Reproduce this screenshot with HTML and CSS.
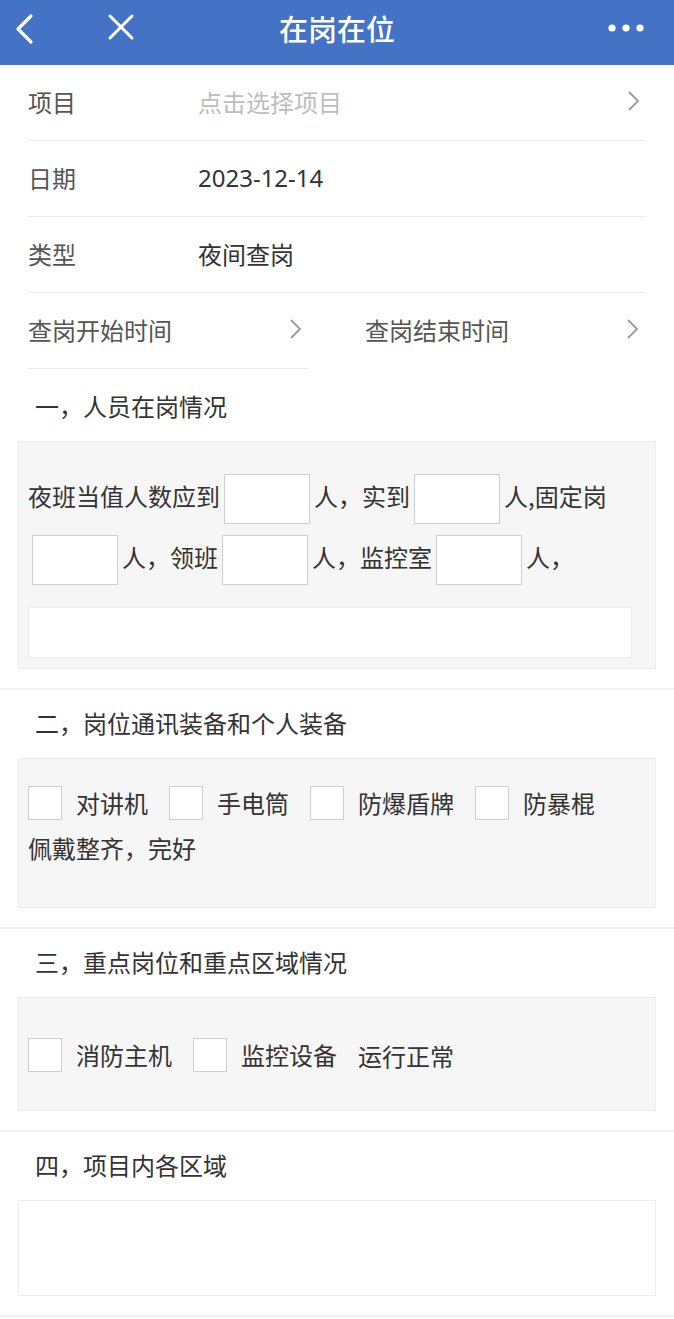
FILE: index.html
```html
<!DOCTYPE html>
<html lang="zh-CN">
<head>
    <meta charset="UTF-8">
    <meta name="viewport" content="width=device-width, initial-scale=1.0">
    <title>在岗在位</title>
    <link rel="stylesheet" href="styles.css">
</head>
<body>
    <header class="topbar">
        <div class="topbar-left">
            <svg class="icon-back" width="24" height="32" viewBox="0 0 24 32">
                <path d="M19 3 L6 16 L19 29" fill="none" stroke="#fff" stroke-width="3.2" stroke-linecap="round" stroke-linejoin="round"/>
            </svg>
            <svg class="icon-close" width="30" height="30" viewBox="0 0 30 30">
                <path d="M4 4 L26 26 M26 4 L4 26" fill="none" stroke="#fff" stroke-width="3" stroke-linecap="round"/>
            </svg>
        </div>
        <h1 class="title">在岗在位</h1>
        <svg class="icon-more" width="36" height="10" viewBox="0 0 36 10">
            <circle cx="4" cy="5" r="3.6" fill="#fff"/>
            <circle cx="18" cy="5" r="3.6" fill="#fff"/>
            <circle cx="32" cy="5" r="3.6" fill="#fff"/>
        </svg>
    </header>

    <form class="form">
        <div class="row">
            <span class="label">项目</span>
            <span class="value placeholder">点击选择项目</span>
            <svg class="chevron" width="14" height="22" viewBox="0 0 14 22"><path d="M3 2 L12 11 L3 20" fill="none" stroke="#9a9a9a" stroke-width="1.8"/></svg>
        </div>
        <div class="row">
            <span class="label">日期</span>
            <span class="value">2023-12-14</span>
        </div>
        <div class="row">
            <span class="label">类型</span>
            <span class="value">夜间查岗</span>
        </div>
        <div class="row-split">
            <div class="row half">
                <span class="label">查岗开始时间</span>
                <svg class="chevron" width="14" height="22" viewBox="0 0 14 22"><path d="M3 2 L12 11 L3 20" fill="none" stroke="#9a9a9a" stroke-width="1.8"/></svg>
            </div>
            <div class="row half no-line">
                <span class="label">查岗结束时间</span>
                <svg class="chevron" width="14" height="22" viewBox="0 0 14 22"><path d="M3 2 L12 11 L3 20" fill="none" stroke="#9a9a9a" stroke-width="1.8"/></svg>
            </div>
        </div>

        <section class="section first">
            <h2 class="section-title">一，人员在岗情况</h2>
            <div class="panel panel-staff">
                <p class="fill-line">夜班当值人数应到<input class="num" type="text">人，实到<input class="num" type="text">人,固定岗<br><input class="num" type="text">人，领班<input class="num" type="text">人，监控室<input class="num" type="text">人，</p>
                <input class="note" type="text">
            </div>
        </section>

        <section class="section">
            <h2 class="section-title">二，岗位通讯装备和个人装备</h2>
            <div class="panel panel-gear">
                <div class="checks">
                    <label class="check"><span class="box"></span>对讲机</label>
                    <label class="check"><span class="box"></span>手电筒</label>
                    <label class="check"><span class="box"></span>防爆盾牌</label>
                    <label class="check"><span class="box"></span>防暴棍</label>
                </div>
                <p class="tail">佩戴整齐，完好</p>
            </div>
        </section>

        <section class="section">
            <h2 class="section-title">三，重点岗位和重点区域情况</h2>
            <div class="panel panel-key">
                <div class="checks">
                    <label class="check"><span class="box"></span>消防主机</label>
                    <label class="check"><span class="box"></span>监控设备</label>
                    <span class="plain">运行正常</span>
                </div>
            </div>
        </section>

        <section class="section">
            <h2 class="section-title">四，项目内各区域</h2>
            <div class="panel panel-area"></div>
        </section>
    </form>
</body>
</html>
```

FILE: styles.css
```css
body {
    margin: 0;
    padding: 0;
    background: #ffffff;
    font-family: "Noto Sans CJK SC", "Noto Sans", sans-serif;
    color: #333;
}
.topbar {
    height: 65px;
    background: #4472c4;
    display: flex;
    align-items: center;
    justify-content: space-between;
    padding: 0 30px 0 12px;
    position: relative;
}
.topbar-left {
    display: flex;
    align-items: center;
    gap: 70px;
}
.icon-back {
    margin-top: -8px;
}
.icon-close {
    margin-top: -12px;
}
.title {
    position: absolute;
    left: 0;
    right: 0;
    top: 8px;
    margin: 0;
    text-align: center;
    color: #fff;
    font-size: 29px;
    font-weight: 500;
    line-height: 40px;
    pointer-events: none;
}
.icon-more {
    margin-top: -9px;
}
.form {
    margin: 0;
}
.row {
    display: flex;
    align-items: center;
    box-sizing: border-box;
    height: 76px;
    padding-bottom: 3px;
    margin: 0 28px;
    border-bottom: 1px solid #ededed;
    font-size: 24px;
}
.label {
    width: 170px;
    color: #555;
}
.value {
    flex: 1;
    color: #333;
    font-family: "Noto Sans", "Noto Sans CJK SC", sans-serif;
}
.placeholder {
    color: #bdbdbd;
    font-family: "Noto Sans CJK SC", sans-serif;
}
.chevron {
    margin-left: auto;
    margin-right: 6px;
}
.row-split {
    display: grid;
    grid-template-columns: 280px 280px;
    column-gap: 57px;
    padding: 0 28px;
}
.row.half {
    margin: 0;
}
.row.half .label {
    width: auto;
}
.row.no-line {
    border-bottom-color: transparent;
}
.section {
    padding: 17px 18px 19px;
    border-bottom: 2px solid #f1f1f1;
}
.section.first {
    padding-top: 21px;
}
.section-title {
    margin: 0 0 19px 17px;
    font-size: 24px;
    font-weight: normal;
    line-height: 32px;
    color: #333;
}
.panel {
    background: #f6f6f6;
    border: 1px solid #ececec;
    font-size: 24px;
    color: #333;
}
.panel-staff {
    padding: 23px 24px 10px 9px;
}
.fill-line {
    margin: 0 0 20px;
    line-height: 61px;
}
.num {
    display: inline-block;
    box-sizing: border-box;
    width: 86px;
    height: 50px;
    margin: 0 4px;
    vertical-align: middle;
    border: 1px solid #cfcfcf;
    background: #fff;
    border-radius: 0;
}
.note {
    display: block;
    box-sizing: border-box;
    width: 604px;
    height: 51px;
    border: 1px solid #ededed;
    background: #fff;
    border-radius: 0;
}
.panel-gear {
    height: 148px;
    padding: 0 9px;
}
.checks {
    display: flex;
    align-items: center;
    gap: 21px;
}
.panel-gear .checks {
    margin-top: 27px;
}
.check {
    display: flex;
    align-items: center;
    gap: 14px;
    line-height: 34px;
}
.box {
    display: inline-block;
    box-sizing: border-box;
    width: 34px;
    height: 34px;
    background: #fff;
    border: 1px solid #cfcfcf;
}
.tail {
    margin: 11px 0 0;
    line-height: 34px;
}
.panel-key {
    height: 112px;
    padding: 0 9px;
    display: flex;
    align-items: center;
}
.panel-key .checks {
    margin-top: 2px;
}
.panel-area {
    height: 94px;
    background: #fff;
}
```
